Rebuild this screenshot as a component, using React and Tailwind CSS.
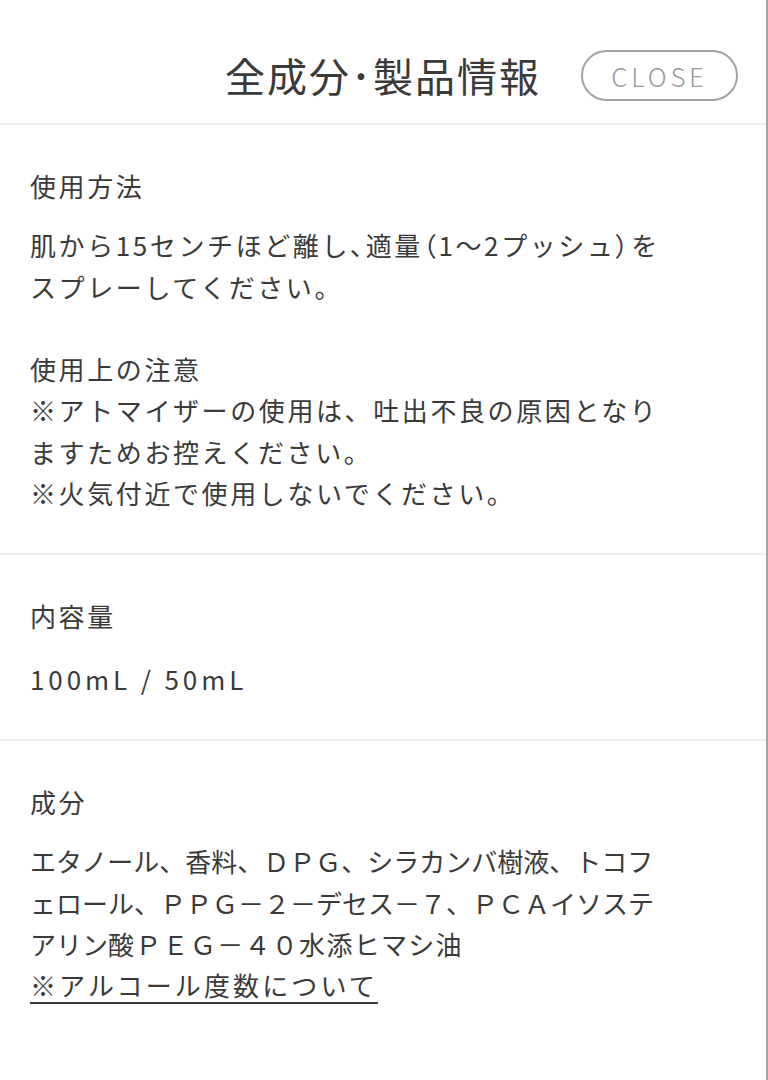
const FONT = { fontFamily: '"Noto Sans CJK JP", "Noto Sans", sans-serif' }

const Section = ({ title, children, last, gap = 'mb-[18px]' }) => (
  <section className={`px-[30px] pt-10 pb-10 ${last ? '' : 'border-b-2 border-[#efefef]'}`}>
    <h3 className={`${gap} text-[26px] font-normal leading-[41.3px] tracking-[0.1em] text-[#3a3a3a]`}>{title}</h3>
    <div className="text-[26px] font-normal leading-[41.3px] tracking-[0.1em] text-[#3a3a3a]">{children}</div>
  </section>
)

// proportional punctuation, as in the reference
const P = ({ children }) => <span className="[font-feature-settings:'palt']">{children}</span>

export default function App() {
  return (
    <div className="min-h-[1080px] w-full bg-white border-r-2 border-[#a3a3a3]" style={FONT}>
      {/* Header */}
      <header className="relative flex h-[125px] items-center justify-center border-b-2 border-[#efefef] pt-[27px] pb-0">
        <h2 className="text-[40px] font-normal leading-none tracking-[0.05em] text-[#3a3a3a]">全成分･製品情報</h2>
        <button className="absolute right-[28px] top-[50px] flex h-[51px] w-[157px] items-center justify-center rounded-full border-2 border-[#a3a3a3] text-[26px] font-light tracking-[0.14em] text-[#999]">
          CLOSE
        </button>
      </header>

      <Section title="使用方法">
        <p>肌から15センチほど離し<P>、</P>適量<P>（</P>1〜2プッシュ<P>）</P>を<br />スプレーしてください。</p>
        <p className="h-[41.3px]" />
        <p>使用上の注意</p>
        <p>※アトマイザーの使用は、吐出不良の原因となり<br />ますためお控えください。</p>
        <p>※火気付近で使用しないでください。</p>
      </Section>

      <Section title="内容量" gap="mb-[21px]">
        <p className="tracking-[0.15em]">100mL / 50mL</p>
      </Section>

      <Section title="成分" last>
        <p className="tracking-normal">
          エタノール、香料、ＤＰＧ、シラカンバ樹液、トコフ<br />
          ェロール、ＰＰＧ－２－デセス－７、ＰＣＡイソステ<br />
          アリン<span className="tracking-[0.05em]">酸ＰＥＧ－４０水添ヒマシ油</span>
        </p>
        <a href="#" className="tracking-[0.12em] underline decoration-[2px] underline-offset-[6px]">※アルコール度数について</a>
      </Section>
    </div>
  )
}
